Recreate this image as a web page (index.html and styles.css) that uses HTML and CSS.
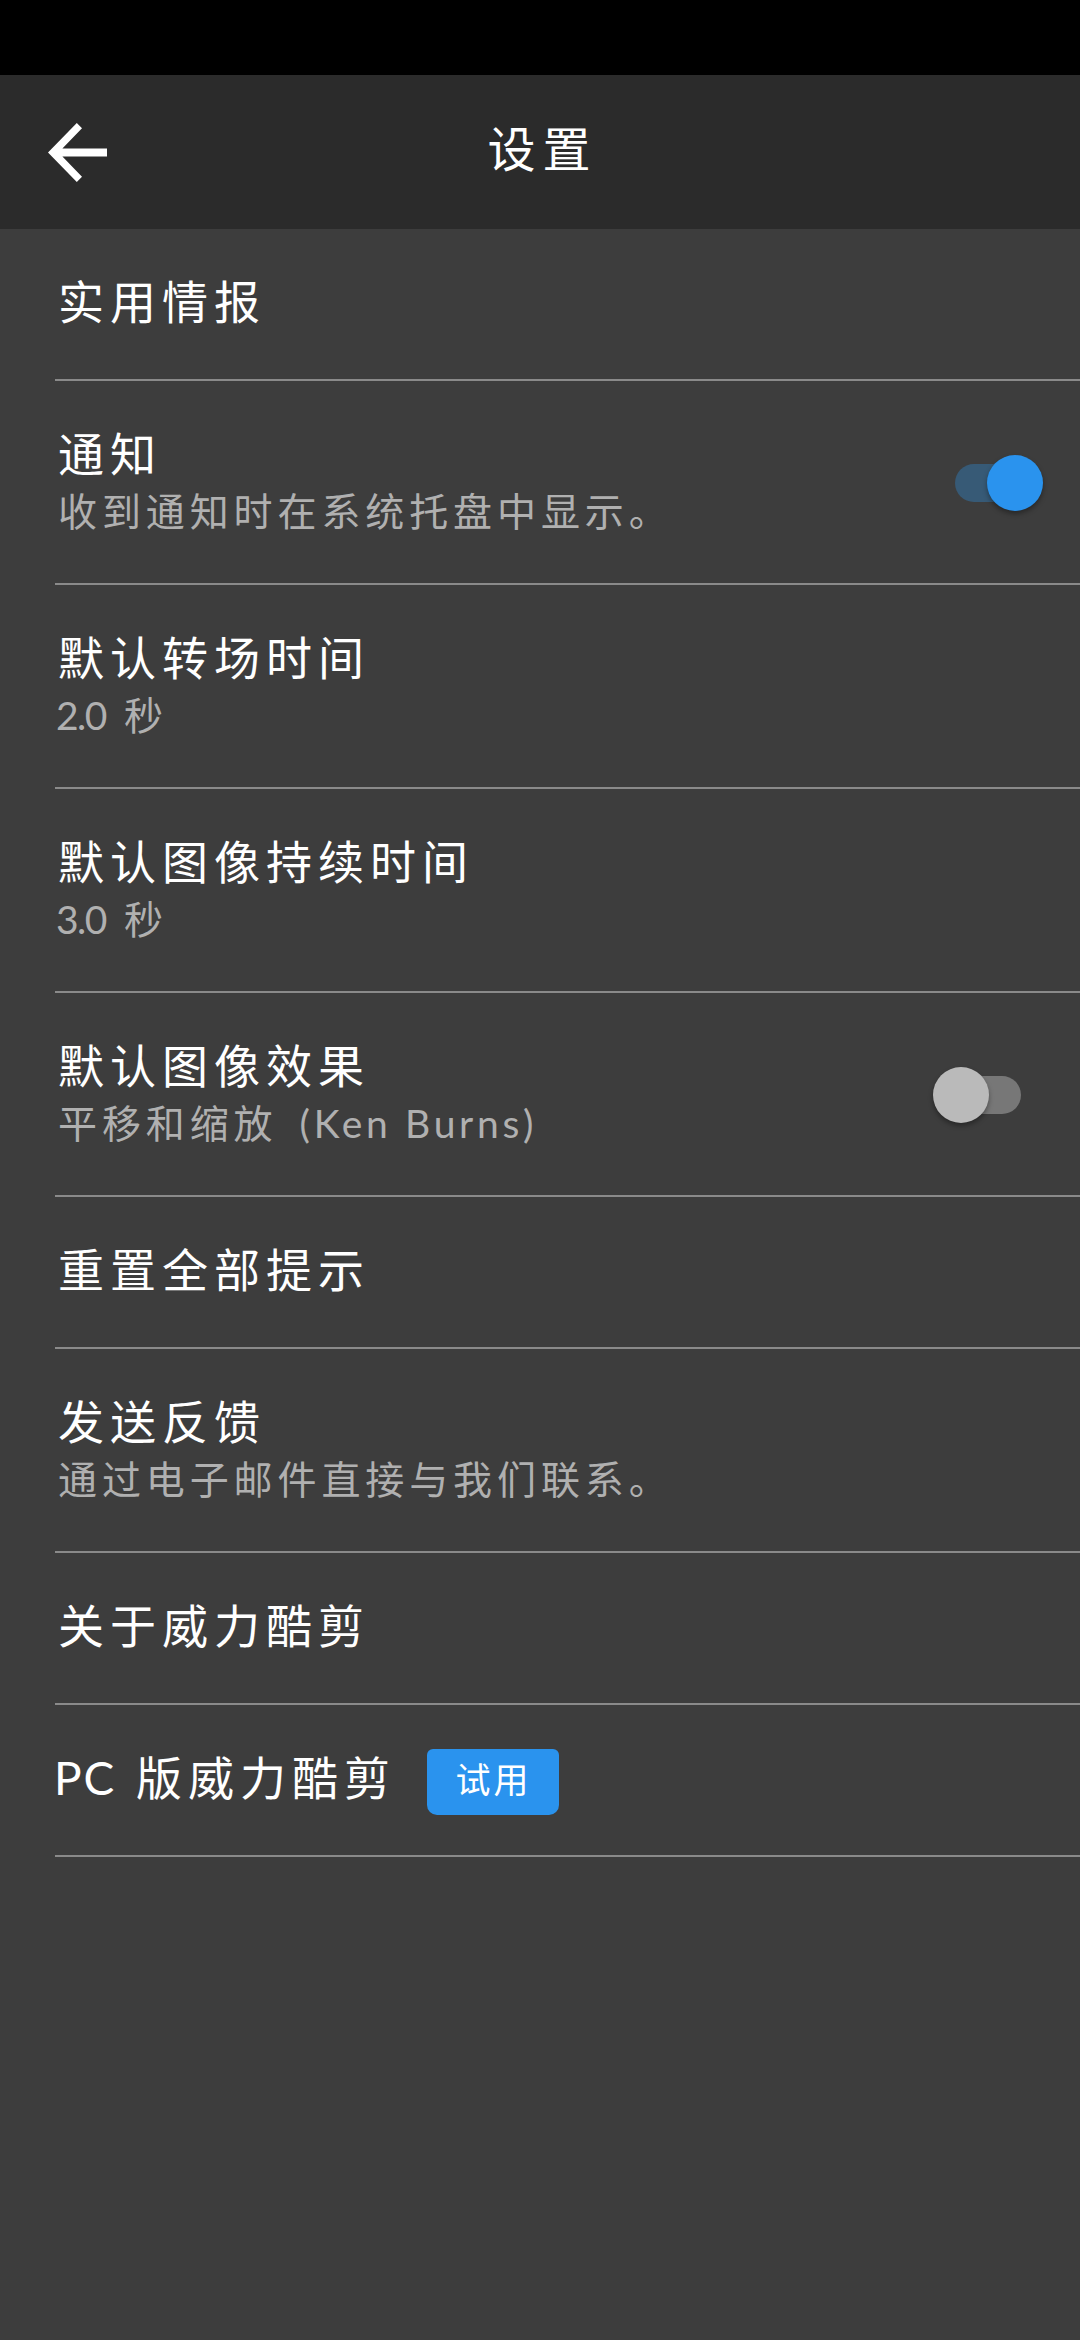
FILE: index.html
```html
<!DOCTYPE html>
<html lang="zh-CN">
<head>
<meta charset="utf-8">
<title>设置</title>
<link rel="stylesheet" href="styles.css">
</head>
<body>
<div class="status-bar"></div>
<header class="app-bar">
  <svg class="back" viewBox="0 0 59 59" aria-label="返回"><path d="M59 25.5H14.4L34 5.2 28.8 0 0 29.5 28.8 59 34 53.8 14.4 33.5H59z" fill="#fff"/></svg>
  <h1 class="app-title">设置</h1>
</header>
<main class="list">
  <section class="row">
    <div class="text"><div class="title">实用情报</div></div>
  </section>
  <section class="row">
    <div class="text">
      <div class="title">通知</div>
      <div class="sub">收到通知时在系统托盘中显示。</div>
    </div>
    <div class="switch on"><span class="track"></span><span class="thumb"></span></div>
  </section>
  <section class="row">
    <div class="text">
      <div class="title">默认转场时间</div>
      <div class="sub"><span class="num">2.0</span>秒</div>
    </div>
  </section>
  <section class="row">
    <div class="text">
      <div class="title">默认图像持续时间</div>
      <div class="sub"><span class="num">3.0</span>秒</div>
    </div>
  </section>
  <section class="row">
    <div class="text">
      <div class="title">默认图像效果</div>
      <div class="sub">平移和缩放<span class="latin">(Ken Burns)</span></div>
    </div>
    <div class="switch"><span class="track"></span><span class="thumb"></span></div>
  </section>
  <section class="row">
    <div class="text"><div class="title">重置全部提示</div></div>
  </section>
  <section class="row">
    <div class="text">
      <div class="title">发送反馈</div>
      <div class="sub">通过电子邮件直接与我们联系。</div>
    </div>
  </section>
  <section class="row">
    <div class="text"><div class="title">关于威力酷剪</div></div>
  </section>
  <section class="row">
    <div class="text"><div class="title"><span class="pc">PC</span>版威力酷剪</div></div>
    <button class="try">试用</button>
  </section>
</main>
</body>
</html>
```
FILE: styles.css
```css
* { box-sizing: border-box; }
body {
  margin: 0;
  min-height: 2340px;
  background: #3d3d3d;
  color: #fff;
  font-family: Lato, "Noto Sans CJK SC", sans-serif;
}
.status-bar { height: 75px; background: #000; }
.app-bar {
  height: 154px;
  padding: 0 48px;
  background: #2b2b2b;
  display: grid;
  grid-template-columns: 59px 1fr 59px;
  align-items: center;
}
.back { width: 59px; height: 59px; display: block; }
.app-title {
  margin: 0;
  padding-bottom: 6px;
  text-align: center;
  font-size: 48px;
  font-weight: 400;
  line-height: 60px;
  letter-spacing: 7px;
  text-indent: 5px;
}
.row {
  margin-left: 55px;
  border-bottom: 2px solid #8a8a8a;
  display: flex;
  align-items: flex-start;
}
.text { padding: 44px 0 44px 3px; }
.title {
  height: 58px;
  font-size: 46px;
  line-height: 58px;
  letter-spacing: 6px;
  white-space: nowrap;
}
.title:only-child { margin-bottom: 4px; }
.sub {
  height: 56px;
  font-size: 39px;
  line-height: 56px;
  letter-spacing: 4.9px;
  color: #b0b0b0;
  white-space: nowrap;
}
.num { display: inline-block; width: 66px; letter-spacing: -1.5px; text-indent: -2px; }
.latin { margin-left: 22px; letter-spacing: 3.7px; }
.pc { display: inline-block; width: 78px; letter-spacing: 2px; text-indent: -4px; }
.switch {
  position: relative;
  width: 88px;
  height: 56px;
  margin: 74px 59px 0 auto;
}
.switch.on { margin-right: 37px; }
.track {
  position: absolute;
  top: 9px;
  left: 20px;
  width: 68px;
  height: 38px;
  border-radius: 19px;
  background: #777;
}
.thumb {
  position: absolute;
  top: 0;
  left: 0;
  width: 56px;
  height: 56px;
  border-radius: 50%;
  background: #bababa;
  box-shadow: 0 3px 5px rgba(0, 0, 0, .35);
}
.on .track { left: 0; background: #375a76; }
.on .thumb { left: 32px; background: #2a93ee; }
.try {
  width: 132px;
  height: 66px;
  margin: 44px 0 0 31px;
  padding: 0 0 6px 1px;
  border: 0;
  border-radius: 6px 6px 10px 10px;
  background: #2a93ee;
  color: #fff;
  font: 35px/60px Lato, "Noto Sans CJK SC", sans-serif;
  letter-spacing: 3px;
}
```
